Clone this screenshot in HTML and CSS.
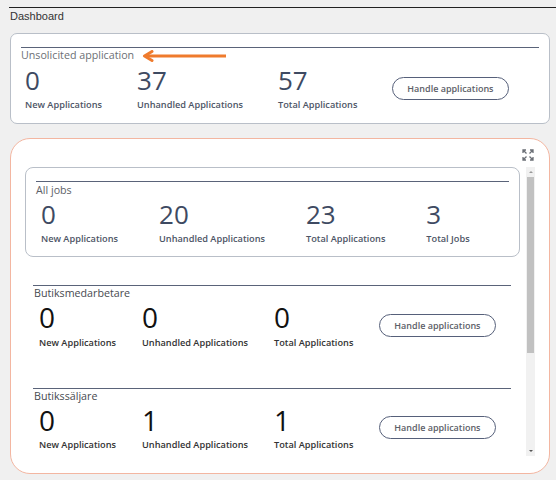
FILE: index.html
```html
<!DOCTYPE html>
<html lang="en">

<head>
  <meta charset="UTF-8">
  <meta name="viewport" content="width=device-width, initial-scale=1.0">
  <title>Dashboard</title>
  <link rel="stylesheet" href="styles.css">
</head>

<body>
  <header class="page-header">Dashboard</header>

  <section class="card summary">
    <div class="card-title">
      <span>Unsolicited application</span>
      <svg class="hint-arrow" width="84" height="12" viewBox="0 0 84 12">
        <path d="M3 6H84" stroke="#ef7b2d" stroke-width="3" fill="none" />
        <path d="M10 1.5L2.5 6L10 10.5" stroke="#ef7b2d" stroke-width="3" fill="none" stroke-linecap="round" stroke-linejoin="round" />
      </svg>
    </div>
    <div class="stats">
      <div class="stat">
        <div class="stat-value">0</div>
        <div class="stat-label">New Applications</div>
      </div>
      <div class="stat">
        <div class="stat-value">37</div>
        <div class="stat-label">Unhandled Applications</div>
      </div>
      <div class="stat">
        <div class="stat-value">57</div>
        <div class="stat-label">Total Applications</div>
      </div>
      <button class="handle-btn">Handle applications</button>
    </div>
  </section>

  <section class="card jobs-panel">
    <div class="panel-tools">
      <svg class="expand-icon" width="12" height="12" viewBox="0 0 12 12">
        <path d="M1 4V1H4M1 1L4.5 4.5M8 1H11V4M11 1L7.5 4.5M1 8V11H4M1 11L4.5 7.5M11 8V11H8M11 11L7.5 7.5" stroke="#6b6f76" stroke-width="1.3" fill="none" />
      </svg>
    </div>

    <div class="jobs-body">
      <div class="jobs-list">
        <div class="card all-jobs">
          <div class="card-title">All jobs</div>
          <div class="stats">
            <div class="stat">
              <div class="stat-value">0</div>
              <div class="stat-label">New Applications</div>
            </div>
            <div class="stat">
              <div class="stat-value">20</div>
              <div class="stat-label">Unhandled Applications</div>
            </div>
            <div class="stat">
              <div class="stat-value">23</div>
              <div class="stat-label">Total Applications</div>
            </div>
            <div class="stat">
              <div class="stat-value">3</div>
              <div class="stat-label">Total Jobs</div>
            </div>
          </div>
        </div>

        <div class="job">
          <div class="job-title">Butiksmedarbetare</div>
          <div class="stats">
            <div class="stat">
              <div class="stat-value">0</div>
              <div class="stat-label">New Applications</div>
            </div>
            <div class="stat">
              <div class="stat-value">0</div>
              <div class="stat-label">Unhandled Applications</div>
            </div>
            <div class="stat">
              <div class="stat-value">0</div>
              <div class="stat-label">Total Applications</div>
            </div>
            <button class="handle-btn">Handle applications</button>
          </div>
        </div>

        <div class="job">
          <div class="job-title">Butikssäljare</div>
          <div class="stats">
            <div class="stat">
              <div class="stat-value">0</div>
              <div class="stat-label">New Applications</div>
            </div>
            <div class="stat">
              <div class="stat-value">1</div>
              <div class="stat-label">Unhandled Applications</div>
            </div>
            <div class="stat">
              <div class="stat-value">1</div>
              <div class="stat-label">Total Applications</div>
            </div>
            <button class="handle-btn">Handle applications</button>
          </div>
        </div>
      </div>

      <!-- scrollbar drawn by hand, the list is longer than the panel -->
      <div class="scrollbar">
        <div class="scroll-arrow up"></div>
        <div class="scroll-track">
          <div class="scroll-thumb"></div>
        </div>
        <div class="scroll-arrow down"></div>
      </div>
    </div>
  </section>
</body>

</html>
```

FILE: styles.css
```css
body {
  margin: 0;
  padding: 7px 0 0 9px;
  background-color: #f0f0f0;
  font-family: "Open Sans", sans-serif;
}

.page-header {
  border-top: 1.5px solid #222;
  padding: 1px 0 0 1px;
  font-family: "Liberation Sans", Arial, sans-serif;
  font-size: 11px;
  line-height: 14px;
  color: #333;
}

.card {
  background-color: white;
  border: 1px solid #b9bfc8;
  border-radius: 7px;
  padding: 13px 10px 11.5px;
}

.summary {
  margin: 10px 6px 0 1px;
}

.card-title {
  display: flex;
  align-items: center;
  gap: 8px;
  border-top: 1.5px solid #5a6379;
  font-size: 10.7px;
  line-height: 15px;
  color: #6c6f75;
}

.all-jobs .card-title {
  padding-top: 1px;
  line-height: 14px;
  color: #5d6168;
}

.stats {
  display: flex;
  align-items: center;
  margin-top: 2px;
}

.summary .stats {
  gap: 35px;
  padding-left: 4px;
}

.all-jobs .stats {
  gap: 41px;
  padding-left: 5px;
}

.stat-value {
  font-size: 26px;
  line-height: 30px;
  color: #3e4a62;
}

.stat-label {
  margin-top: 4px;
  font-size: 9.2px;
  line-height: 12px;
  font-weight: 600;
  color: #4d5566;
  white-space: nowrap;
}

.handle-btn {
  height: 23px;
  padding: 0 14px;
  background-color: white;
  border: 1.3px solid #56607a;
  border-radius: 12px;
  font-family: "Open Sans", sans-serif;
  font-size: 9px;
  font-weight: 600;
  color: #5c6068;
  cursor: pointer;
}

.jobs-panel {
  margin: 14px 6px 0 1px;
  border-color: #f3b6a1;
  border-radius: 20px;
  padding: 10px 14px 17px;
}

.panel-tools {
  display: flex;
  justify-content: flex-end;
  height: 12px;
  margin: 0 1px 6px 0;
}

.jobs-body {
  display: flex;
  height: 289px;
}

.jobs-list {
  flex: 1;
  overflow: hidden;
}

.scrollbar {
  width: 9px;
  display: flex;
  flex-direction: column;
  background-color: #f1f1f1;
}

.scroll-arrow {
  height: 10px;
  display: flex;
  align-items: center;
  justify-content: center;
}

.scroll-arrow::before {
  content: "";
  border-left: 2px solid transparent;
  border-right: 2px solid transparent;
}

.scroll-arrow.up::before {
  border-bottom: 2px solid #999;
}

.scroll-arrow.down::before {
  border-top: 2px solid #555;
}

.scroll-track {
  flex: 1;
}

.scroll-thumb {
  height: 176px;
  margin: 0 1px;
  background-color: #c1c1c1;
}

.all-jobs {
  margin-right: 6px;
  border-radius: 8px;
}

.job {
  margin: 28px 15px 0 8px;
  padding-bottom: 11px;
}

.job + .job {
  margin-top: 28px;
}

.job-title {
  border-top: 1.5px solid #5a6379;
  padding-left: 1px;
  font-size: 10.7px;
  line-height: 15px;
  color: #474a50;
}

.job .stats {
  gap: 26px;
  padding-left: 6px;
  margin-top: 1px;
}

.job .stat-value {
  font-size: 28px;
  color: #111;
}

.job .stat-label {
  margin-top: 4.5px;
  color: #333;
}
```
